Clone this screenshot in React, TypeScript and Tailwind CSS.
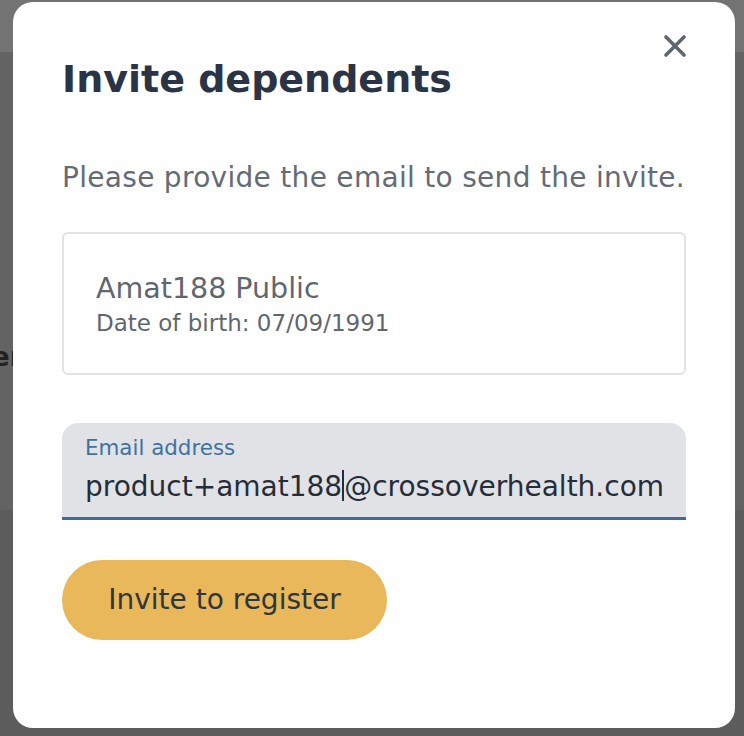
import { X } from 'lucide-react';

export default function App() {
  return (
    <div className="relative h-[736px] w-[744px] overflow-hidden bg-[#636363] font-['DejaVu_Sans',sans-serif]">
      {/* Backdrop: dimmed page behind the dialog */}
      <div className="absolute inset-x-0 top-0 h-[52px] bg-[#737373]" />
      <div className="absolute inset-x-0 bottom-0 h-[226px] bg-[#5c5c5c]" />
      <span className="absolute left-[-8px] top-[338px] text-[26px] font-bold text-[#222]">er</span>

      {/* Dialog */}
      <div className="relative ml-[13px] mt-[2px] flex h-[726px] w-[722px] flex-col rounded-[20px] bg-white px-[49px] pt-[50px]">
        <button className="absolute right-[42px] top-[26px] text-[#5f6670]">
          <X size={36} strokeWidth={2.4} />
        </button>

        <h1 className="text-[38px] font-bold leading-[54px] text-[#2a3444]">Invite dependents</h1>

        <p className="mt-[54px] whitespace-nowrap text-[28px] leading-[36px] tracking-[0.3px] text-[#646b75]">
          Please provide the email to send the invite.
        </p>

        <div className="mt-[36px] flex h-[143px] flex-col justify-center rounded-[6px] border-2 border-[#e3e3e3] px-[32px]">
          <div className="text-[28.5px] leading-[36px] text-[#5f6670]">Amat188 Public</div>
          <div className="mt-[2px] text-[23px] leading-[28px] text-[#5f6670]">Date of birth: 07/09/1991</div>
        </div>

        <div className="mt-[48px] h-[97px] overflow-hidden rounded-t-[16px] border-b-[3px] border-[#3b6e9e] bg-[#e1e2e6] px-[23px] pt-[11px]">
          <div className="text-[21.4px] leading-[28px] text-[#3f72a3]">Email address</div>
          <div className="mt-[3px] whitespace-nowrap text-[28px] leading-[36px] text-[#252d38]">
            product+amat188<span className="inline-block h-[31px] w-[2px] translate-y-[5px] bg-[#252d38]" />@crossoverhealth.com
          </div>
        </div>

        <button className="mt-[40px] h-[80px] w-[325px] rounded-full bg-[#e8b85a] text-[28px] text-[#2e3640]">
          Invite to register
        </button>
      </div>
    </div>
  );
}
